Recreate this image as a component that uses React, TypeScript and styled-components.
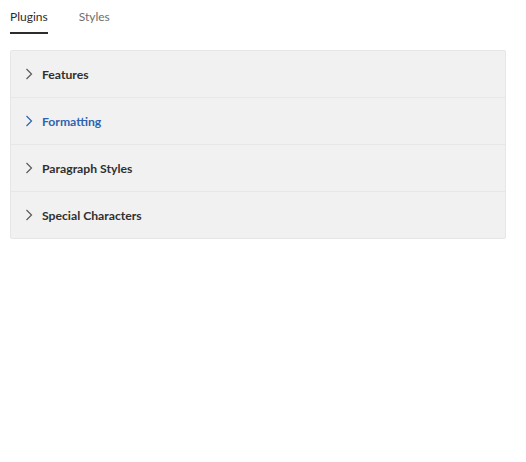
import styled, { createGlobalStyle } from "styled-components";

const GlobalStyle = createGlobalStyle`
  html, body {
    margin: 0;
    padding: 0;
    background: #ffffff;
  }
  body {
    font-family: Lato, "Open Sans", sans-serif;
    color: #2c2c2c;
  }
`;

const Page = styled.div`
  width: 526px;
  height: 462px;
  box-sizing: border-box;
  padding: 0 20px 0 10px;
`;

const TabList = styled.div`
  display: flex;
  gap: 31px;
  height: 35px;
  margin-bottom: 15px;
`;

const Tab = styled.div<{ $active?: boolean }>`
  position: relative;
  padding-top: 9px;
  font-size: 12px;
  color: ${(p) => (p.$active ? "#2c2c2c" : "#6e6e6e")};
  &::after {
    content: "";
    display: ${(p) => (p.$active ? "block" : "none")};
    position: absolute;
    left: 0;
    right: 0;
    top: 32px;
    height: 2px;
    background: #2c2c2c;
  }
`;

const Panel = styled.div`
  background: #f1f1f1;
  border: 1px solid #e6e6e6;
  border-radius: 2px;
`;

const Row = styled.div<{ $last?: boolean }>`
  display: flex;
  align-items: center;
  gap: 9px;
  height: 46px;
  padding-left: 14px;
  border-bottom: ${(p) => (p.$last ? "none" : "1px solid #e7e7e7")};
`;

const Label = styled.span<{ $active?: boolean }>`
  font-size: 12.2px;
  font-weight: 700;
  color: ${(p) => (p.$active ? "#2d63b0" : "#2f2f2f")};
`;

const Chevron = ({ color }: { color: string }) => (
  <svg width="8" height="12" viewBox="0 0 8 12">
    <path d="M1.5 1 L6.5 6 L1.5 11" fill="none" stroke={color} strokeWidth="1.2" />
  </svg>
);

const items = [
  { name: "Features" },
  { name: "Formatting", active: true },
  { name: "Paragraph Styles" },
  { name: "Special Characters" },
];

export default function App() {
  return (
    <>
      <GlobalStyle />
      <Page>
        <TabList>
          <Tab $active>Plugins</Tab>
          <Tab>Styles</Tab>
        </TabList>
        <Panel>
          {items.map((item, i) => (
            <Row key={item.name} $last={i === items.length - 1}>
              <Chevron color={item.active ? "#2d63b0" : "#5a5a5a"} />
              <Label $active={item.active}>{item.name}</Label>
            </Row>
          ))}
        </Panel>
      </Page>
    </>
  );
}
